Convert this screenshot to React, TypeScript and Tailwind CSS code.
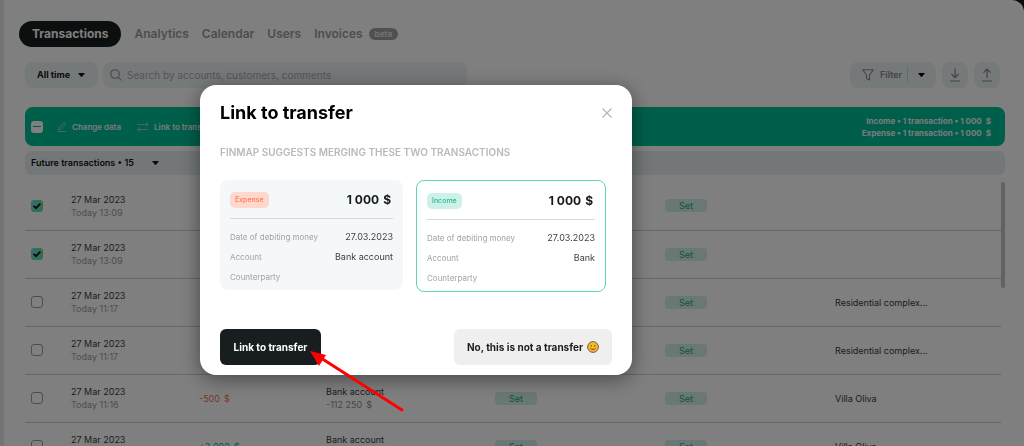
import type { ReactNode } from "react";

type Row = {
  date: string;
  time: string;
  checked?: boolean;
  amount?: string;
  income?: boolean;
  account?: string;
  balance?: string;
  project?: string;
};

const rows: Row[] = [
  { date: "27 Mar 2023", time: "Today 13:09", checked: true },
  { date: "27 Mar 2023", time: "Today 13:09", checked: true },
  { date: "27 Mar 2023", time: "Today 11:17", project: "Residential complex..." },
  { date: "27 Mar 2023", time: "Today 11:17", project: "Residential complex..." },
  { date: "27 Mar 2023", time: "Today 11:16", amount: "-500", account: "Bank account", balance: "-112 250", project: "Villa Oliva" },
  { date: "27 Mar 2023", time: "Today 11:16", amount: "+3 000", income: true, account: "Bank account", balance: "-111 750", project: "Villa Oliva" },
];

const Caret = () => (
  <svg viewBox="0 0 8 5" className="w-[7px] h-1 shrink-0" fill="currentColor" aria-hidden="true">
    <path d="M.6 0h6.8c.5 0 .7.5.4.9L4.5 4.7c-.3.3-.7.3-1 0L.2.9C-.1.5.1 0 .6 0z" />
  </svg>
);

const Money = ({ value }: { value: string }) => (
  <span className="whitespace-nowrap">
    {value}
    <span className="ml-1">$</span>
  </span>
);

const NavLink = ({ children }: { children: ReactNode }) => (
  <a href="#" className="text-xs font-semibold text-[#9b9b9b]">{children}</a>
);

const Checkbox = ({ checked = false, label }: { checked?: boolean; label: string }) => (
  <span className="grid w-3 h-3">
    <input
      type="checkbox"
      defaultChecked={checked}
      aria-label={label}
      className="col-start-1 row-start-1 appearance-none w-3 h-3 rounded-[3px] border border-[#9a9a9a] checked:border-0 checked:bg-linear-to-r checked:from-[#72d5dc] checked:to-[#62dc98]"
    />
    {checked && (
      <svg viewBox="0 0 12 12" className="col-start-1 row-start-1 w-3 h-3 pointer-events-none" fill="none" stroke="#101518" strokeWidth="1.8">
        <path d="M2.6 5.8 5 8.2l4.4-4.5" />
      </svg>
    )}
  </span>
);

const Toolbar = () => (
  <div className="flex items-center gap-[5px] mt-[15px] pl-[21px] pr-6">
    <button className="flex items-center gap-2 h-[26px] w-[73px] pl-3 rounded-lg bg-[#edf3f4] text-[9px] font-bold whitespace-nowrap">
      All time
      <Caret />
    </button>
    <label className="flex items-center gap-[5px] h-[26px] w-[364px] px-[7px] rounded-lg bg-[#edf3f4]">
      <svg viewBox="0 0 12 12" className="w-3 h-3 shrink-0" fill="none" stroke="#8c9192" strokeWidth="1.1">
        <circle cx="5" cy="5" r="4.3" />
        <path d="m8.2 8.2 3.2 3.2" />
      </svg>
      <input
        type="search"
        aria-label="Search"
        placeholder="Search by accounts, customers, comments"
        className="w-full bg-transparent outline-none text-[10px] placeholder:text-[#a6abac]"
      />
    </label>
    <div className="ml-auto flex gap-[6px] text-[#858a8b]">
      <div className="flex items-center h-[26px] w-[86px] pl-3 rounded-lg bg-[#edf3f4]">
        <button className="flex items-center gap-[6px] text-[9px] font-semibold">
          <svg viewBox="0 0 12 12" className="w-3 h-3" fill="none" stroke="currentColor" strokeWidth="1.1" strokeLinejoin="round">
            <path d="M.7.8h10.6L7.5 6v5L4.5 9.6V6z" />
          </svg>
          Filter
        </button>
        <span className="w-px h-[15px] ml-[5px] bg-[#c9d2d4]" />
        <button aria-label="Saved filters" className="ml-[10px] text-black"><Caret /></button>
      </div>
      <button aria-label="Import" className="grid place-items-center w-[26px] h-[26px] rounded-lg bg-[#edf3f4]">
        <svg viewBox="0 0 12 14" className="w-3 h-[14px]" fill="none" stroke="currentColor" strokeWidth="1.2">
          <path d="M6 .5v9M2.4 6 6 9.6 9.6 6M1 13h10" />
        </svg>
      </button>
      <button aria-label="Export" className="grid place-items-center w-[26px] h-[26px] rounded-lg bg-[#edf3f4]">
        <svg viewBox="0 0 12 14" className="w-3 h-[14px]" fill="none" stroke="currentColor" strokeWidth="1.2">
          <path d="M6 10V1M2.4 4.6 6 1l3.6 3.6M1 13h10" />
        </svg>
      </button>
    </div>
  </div>
);

const SelectionBar = () => (
  <div className="flex items-center h-[39px] mt-[19px] px-[6px] rounded-lg bg-[#00be94] text-[8px] font-semibold text-[#f4f4f4]">
    <button aria-label="Clear selection" className="grid place-items-center w-3 h-3 rounded-[3px] bg-white">
      <span className="w-2 h-px bg-[#00be94]" />
    </button>
    <button className="flex items-center gap-[5px] ml-[14px]">
      <svg viewBox="0 0 10 10" className="w-[10px] h-[10px]" fill="none" stroke="#a9dccf" strokeWidth=".8">
        <path d="M1.5 8 2 5.8 7 .8l1.6 1.6-5 5zM1 9.5h8" />
      </svg>
      Change data
    </button>
    <button className="flex items-center gap-[5px] ml-4">
      <svg viewBox="0 0 12 10" className="w-3 h-[10px]" fill="none" stroke="#a9dccf" strokeWidth=".8">
        <path d="M.5 2.5h10.8M9 .3l2.3 2.2L9 4.7M11.5 7.5H.7M3 5.3.7 7.5 3 9.7" />
      </svg>
      Link to transfer
    </button>
    <div className="ml-auto pr-2 text-right leading-3 font-bold">
      <p>Income • 1 transaction • <Money value="1 000" /></p>
      <p>Expense • 1 transaction • <Money value="1 000" /></p>
    </div>
  </div>
);

const SetButton = ({ label }: { label: string }) => (
  <button aria-label={label} className="block w-[42px] h-[13px] rounded-[4px] bg-[#d3f1e9] text-[9px] leading-[13px] text-[#16a884]">Set</button>
);

const TransactionsTable = () => (
  <div className="flex mt-[7px]">
    <table className="grow table-fixed text-[9px] leading-[13px] text-[#35393b]">
      <colgroup>
        <col className="w-[46px]" />
        <col className="w-[128px]" />
        <col className="w-[127px]" />
        <col className="w-[169px]" />
        <col className="w-[170px]" />
        <col className="w-[170px]" />
        <col />
      </colgroup>
      <tbody>
        {rows.map((row, i) => (
          <tr key={i} className="h-12 border-b border-[#cfcfcf]">
            <td className="pl-[6px]"><Checkbox checked={row.checked} label={`Transaction ${i + 1}`} /></td>
            <td>
              <p>{row.date}</p>
              <p className="text-[#9b9b9b]">{row.time}</p>
            </td>
            <td className={row.income ? "text-[#0fae88]" : "text-[#f26c48]"}>
              {row.amount && <Money value={row.amount} />}
            </td>
            <td>
              {row.account && <p>{row.account}</p>}
              {row.balance && <p className="text-[#8e8e8e]"><Money value={row.balance} /></p>}
            </td>
            <td><SetButton label="Set category" /></td>
            <td><SetButton label="Set counterparty" /></td>
            <td>{row.project}</td>
          </tr>
        ))}
      </tbody>
    </table>
    <div className="w-1 h-[106px] rounded-full bg-[#c4c4c4]" />
  </div>
);

type CardProps = { kind: "Expense" | "Income"; account: string };

const TransferCard = ({ kind, account }: CardProps) => {
  const income = kind === "Income";
  return (
    <div className={income
      ? "w-[190px] h-28 px-[10px] pt-3 rounded-lg border border-[#5fd3b8] bg-white"
      : "w-[183px] h-[110px] px-[10px] pt-3 rounded-lg bg-[#f4f8fa]"}
    >
      <div className="flex items-center justify-between h-4">
        <span className={income
          ? "px-[5px] h-4 leading-4 rounded-[5px] text-[7px] font-medium bg-[#cdf1e8] text-[#23bb96]"
          : "px-[5px] h-4 leading-4 rounded-[5px] text-[7px] font-medium bg-[#ffd8cd] text-[#ff7850]"}
        >
          {kind}
        </span>
        <span className="pr-[2px] text-xs font-bold text-[#15191b]"><Money value="1 000" /></span>
      </div>
      <dl className="mt-[10px] pt-3 border-t border-[#d5d8d9] grid grid-cols-[auto_1fr] gap-y-2 text-[9px] leading-3 text-[#3b3f42]">
        <dt className="text-[8px] text-[#9fa2a4]">Date of debiting money</dt>
        <dd className="text-right">27.03.2023</dd>
        <dt className="text-[8px] text-[#9fa2a4]">Account</dt>
        <dd className="text-right">{account}</dd>
        <dt className="text-[8px] text-[#9fa2a4]">Counterparty</dt>
        <dd />
      </dl>
    </div>
  );
};

const Smile = () => (
  <svg viewBox="0 0 12 12" className="w-3 h-3" aria-hidden="true">
    <circle cx="6" cy="6" r="5.4" fill="#fdb92c" stroke="#4c4335" strokeWidth=".8" />
    <ellipse cx="4.2" cy="4.8" rx=".6" ry=".8" fill="#3f3320" />
    <ellipse cx="7.8" cy="4.8" rx=".6" ry=".8" fill="#3f3320" />
    <path d="M3.6 7.6C4.7 8.8 7.3 8.8 8.4 7.6" fill="none" stroke="#3f3320" strokeWidth=".8" strokeLinecap="round" />
  </svg>
);

const PointerArrow = () => (
  <svg viewBox="0 0 96 64" className="absolute left-[109px] top-[264px] w-24 h-16 pointer-events-none" aria-hidden="true">
    <path d="M12 9 93 61" stroke="#fe0000" strokeWidth="3" strokeLinecap="round" />
    <path d="M1 2 17 6 10 17z" fill="#fe0000" />
  </svg>
);

const TransferModal = () => (
  <div className="fixed inset-0 flex items-center justify-center pt-[14px] pr-48 bg-black/50">
    <div role="dialog" aria-modal="true" aria-labelledby="modal-title" className="relative w-[432px] px-5 pt-4 pb-[10px] rounded-2xl bg-white shadow-[0_4px_20px_rgba(0,0,0,0.45)]">
      <div className="flex items-center justify-between">
        <h2 id="modal-title" className="text-lg leading-6 font-bold text-black">Link to transfer</h2>
        <button aria-label="Close">
          <svg viewBox="0 0 10 10" className="w-[10px] h-[10px]" fill="none" stroke="#b5b5b5" strokeWidth="1.2">
            <path d="m.5.5 9 9M9.5.5l-9 9" />
          </svg>
        </button>
      </div>
      <p className="mt-[19px] text-[10px] leading-4 font-semibold text-[#b9b9b9] uppercase">Finmap suggests merging these two transactions</p>
      <div className="flex items-start gap-[13px] mt-5">
        <TransferCard kind="Expense" account="Bank account" />
        <TransferCard kind="Income" account="Bank" />
      </div>
      <div className="flex justify-between mt-[37px] text-[10px] font-bold">
        <button className="h-9 w-[101px] rounded-md bg-[#181e20] text-white">Link to transfer</button>
        <button className="flex items-center justify-center gap-1 h-9 w-[158px] rounded-md bg-[#efefef] text-[#1d1d1d]">
          No, this is not a transfer
          <Smile />
        </button>
      </div>
      <PointerArrow />
    </div>
  </div>
);

export default function App() {
  return (
    <div className="h-screen overflow-hidden bg-[#101416] font-['Inter',sans-serif] text-[#101416]">
      <div className="h-full overflow-hidden border-l-4 border-[#e3ebf0] rounded-tr-xl bg-white">
        <nav className="flex items-center gap-[13px] pl-[15px] pt-[21px]">
          <a href="#" aria-current="page" className="flex items-center h-[26px] px-[13px] rounded-full bg-[#181e20] text-xs font-bold text-white">Transactions</a>
          <NavLink>Analytics</NavLink>
          <NavLink>Calendar</NavLink>
          <NavLink>Users</NavLink>
          <span className="flex items-center gap-[6px]">
            <NavLink>Invoices</NavLink>
            <span className="px-[6px] h-3 rounded-full bg-[#a0a0a0] text-[8px] leading-3 font-bold text-[#e4e4e4]">beta</span>
          </span>
        </nav>
        <Toolbar />
        <main className="pl-[21px] pr-[19px]">
          <SelectionBar />
          <button className="flex items-center gap-[18px] w-full h-6 mt-[5px] px-[6px] rounded-md bg-[#e6eef1] text-[9px] font-semibold">
            Future transactions • 15
            <Caret />
          </button>
          <TransactionsTable />
        </main>
      </div>
      <TransferModal />
    </div>
  );
}
